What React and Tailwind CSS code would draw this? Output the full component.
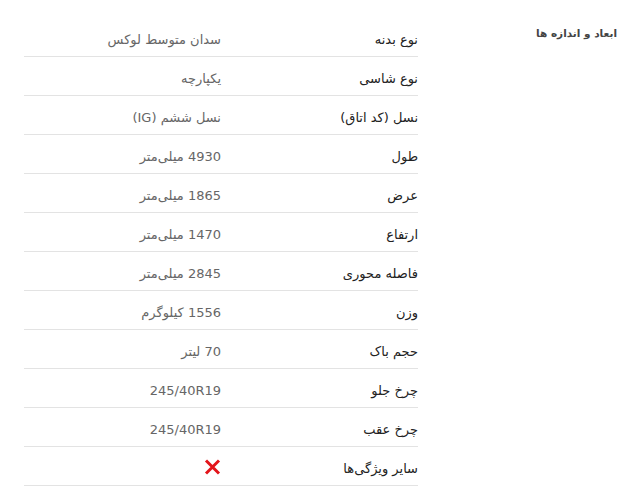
import React from "react";

const specs = [
  { label: "نوع بدنه", value: "سدان متوسط لوکس" },
  { label: "نوع شاسی", value: "یکپارچه" },
  { label: "نسل (کد اتاق)", value: "نسل ششم (IG)" },
  { label: "طول", value: "4930 میلی‌متر" },
  { label: "عرض", value: "1865 میلی‌متر" },
  { label: "ارتفاع", value: "1470 میلی‌متر" },
  { label: "فاصله محوری", value: "2845 میلی‌متر" },
  { label: "وزن", value: "1556 کیلوگرم" },
  { label: "حجم باک", value: "70 لیتر" },
  { label: "چرخ جلو", value: "245/40R19" },
  { label: "چرخ عقب", value: "245/40R19" },
  { label: "سایر ویژگی‌ها", value: null },
];

function Cross() {
  return (
    <svg width="17" height="16" viewBox="0 0 17 16" className="-mt-[3px]">
      <path
        d="M2 1.5 L15 14.5 M15 1.5 L2 14.5"
        stroke="#e3151b"
        strokeWidth="3"
        strokeLinecap="butt"
      />
    </svg>
  );
}

export default function App() {
  return (
    <div
      dir="rtl"
      className="flex w-[638px] h-[490px] bg-white pt-[18px] overflow-hidden"
      style={{ fontFamily: "'DejaVu Sans', 'Noto Sans', sans-serif" }}
    >
      <div className="w-[220px] shrink-0 pr-[21px] pt-[8px]">
        <h3 className="text-[10.5px] font-bold text-[#444]">ابعاد و اندازه ها</h3>
      </div>

      <div className="w-[394px] shrink-0">
        {specs.map((row) => (
          <div
            key={row.label}
            className="flex items-center h-[39px] border-b border-[#e3e3e3] pt-[5px]"
          >
            <div className="w-1/2 text-[13px] text-[#222]">{row.label}</div>
            <div className="w-1/2 text-[13px] text-[#666]">
              {row.value ? row.value : <Cross />}
            </div>
          </div>
        ))}
      </div>
    </div>
  );
}
